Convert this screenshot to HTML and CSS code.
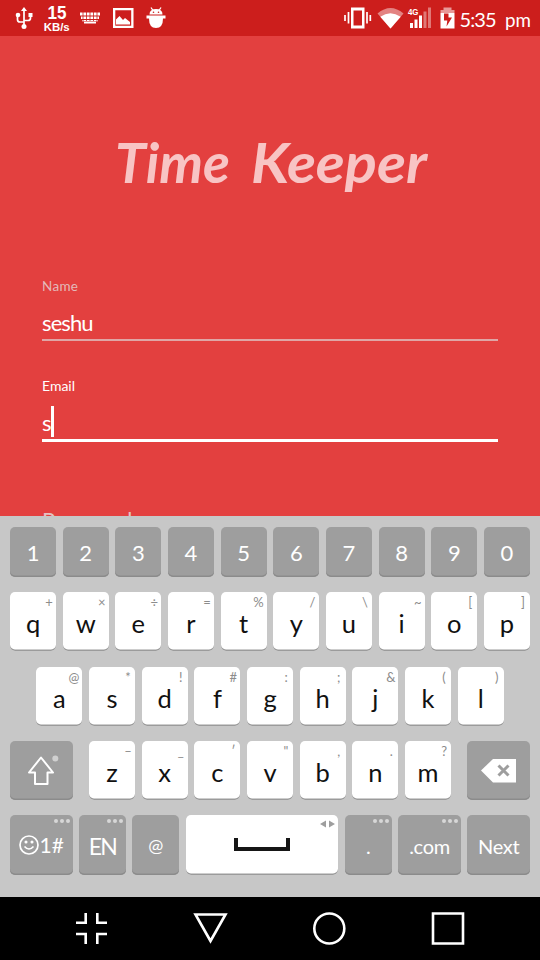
FILE: index.html
```
<!DOCTYPE html>
<html lang="en">
<head>
<meta charset="utf-8">
<title>Time Keeper</title>
<link rel="stylesheet" href="styles.css">
</head>
<body>
<main class="phone">
  <header class="status">
    <svg class="status-left" width="170" height="36" viewBox="0 0 170 36" fill="#fff">
      <g stroke="#fff" stroke-width="1.700" fill="none"><path d="M24 27V10M24 22h-4q-2.500 0-2.500-2.500V16M24 20.500h4q2.500 0 2.500-2.500V16"/></g>
      <path d="M24 7l-3 4h6zM28.500 13h4v4h-4z"/><circle cx="18" cy="15" r="2.300"/><circle cx="24" cy="26.500" r="2.500"/>
      <text class="rate" x="57" y="19" textLength="19" lengthAdjust="spacingAndGlyphs">15</text>
      <text class="unit" x="56.700" y="30.500" textLength="26" lengthAdjust="spacingAndGlyphs">KB/s</text>
      <path d="M80 12.500h20v3h-20zM81 16.500h18v2.500h-18zM82 20h16v1.300h-16zM84 21.700h12v1.800h-12z"/>
      <path d="M83 12v9M86.500 12v9M90 12v9M93.500 12v9M97 12v9" stroke="#cc1e1c" stroke-width=".8"/>
      <path d="M113 8h20.500v20H113zM115.300 10.200v15.600h15.900V10.200z" fill-rule="evenodd"/><path d="M116 24.500v-5l3.500-3.500 3.500 4 2-2 5 4v2.500z"/>
      <path d="M149.500 14.500q0-5.500 6.500-5.500t6.500 5.500zM146.500 15.500h19v3h-2.500q0 9.500-7 9.500t-7-9.500h-2.500z"/><path d="M151 7.500l2 3M161 7.500l-2 3" stroke="#fff" stroke-width="1.300"/><circle cx="153.500" cy="12.300" r=".8" fill="#cc1e1c"/><circle cx="158.500" cy="12.300" r=".8" fill="#cc1e1c"/>
    </svg>
    <svg class="status-right" width="200" height="36" viewBox="340 0 200 36" fill="#fff">
      <path d="M351 7.500h13.500v21H351zM353.500 10.500v15h8.500v-15z" fill-rule="evenodd"/>
      <path d="M345 15v6M348.500 12v11.500M367 12v11.500M370.300 15v6" stroke="#fff" stroke-width="1.700"/>
      <path d="M377.500 13.500q13-11 26 0L390.500 28.500z" opacity=".45"/><path d="M380.300 16.800q10-7 20.400 0L390.500 28.500z"/>
      <text class="net" x="408" y="15" textLength="10.500" lengthAdjust="spacingAndGlyphs">4G</text>
      <path d="M410 23h3v5h-3zM414.500 19.500h3V28h-3zM419 15.500h3V28h-3z"/><path d="M423.500 11.500h3V28h-3zM428 7.500h3V28h-3z" opacity=".4"/>
      <path d="M443.500 7.500h8V10h3v3h-14v-3h3z" opacity=".55"/><path d="M440.500 13h14v15.500h-14z"/><path d="M444 13.500h4.500v4h3.500l-5.500 9 .8-6H444z" fill="#cc1e1c"/>
      <text class="clock" x="459.500" y="26.500" textLength="37">5:35</text><text class="clock" x="505" y="26.500" textLength="26" lengthAdjust="spacingAndGlyphs">pm</text>
    </svg>
  </header>
  <section class="form">
    <h1 class="title"><svg width="320" height="80" viewBox="112 0 320 80"><text x="115" y="53" textLength="115" lengthAdjust="spacingAndGlyphs">Time</text><text x="251" y="53" textLength="176" lengthAdjust="spacingAndGlyphs">Keeper</text></svg></h1>
    <div class="field">
      <div class="label">Name</div>
      <div class="value">seshu</div>
    </div>
    <div class="field active">
      <div class="label">Email</div>
      <div class="value">s<span class="caret"></span></div>
    </div>
    <div class="password">Password</div>
  </section>
  <section class="keyboard">
    <div class="row digits">
      <div class="key dark">1</div><div class="key dark">2</div><div class="key dark">3</div><div class="key dark">4</div><div class="key dark">5</div><div class="key dark">6</div><div class="key dark">7</div><div class="key dark">8</div><div class="key dark">9</div><div class="key dark">0</div>
    </div>
    <div class="row">
      <div class="key">q<i>+</i></div><div class="key">w<i>×</i></div><div class="key">e<i>÷</i></div><div class="key">r<i>=</i></div><div class="key">t<i>%</i></div><div class="key">y<i>/</i></div><div class="key">u<i>\</i></div><div class="key">i<i>~</i></div><div class="key">o<i>[</i></div><div class="key">p<i>]</i></div>
    </div>
    <div class="row home">
      <div class="key">a<i>@</i></div><div class="key">s<i>*</i></div><div class="key">d<i>!</i></div><div class="key">f<i>#</i></div><div class="key">g<i>:</i></div><div class="key">h<i>;</i></div><div class="key">j<i>&amp;</i></div><div class="key">k<i>(</i></div><div class="key">l<i>)</i></div>
    </div>
    <div class="row">
      <div class="key dark wide shift"><svg width="62" height="58" viewBox="0 0 62 58"><path d="M31 16.500L43 31.500H37.500V43H25V31.500H19Z" fill="none" stroke="#fff" stroke-width="2" stroke-linejoin="round"/><circle cx="45.300" cy="17.500" r="3" fill="#d0d0d0"/></svg></div>
      <div class="key">z<i>–</i></div><div class="key">x<i>_</i></div><div class="key">c<i>′</i></div><div class="key">v<i>"</i></div><div class="key">b<i>,</i></div><div class="key">n<i>.</i></div><div class="key">m<i>?</i></div>
      <div class="key dark wide erase"><svg width="62" height="58" viewBox="0 0 62 58"><path d="M13 29.500L25 18H48V41.500H25Z" fill="#fff"/><path d="M30.500 24.500l10 10M40.500 24.500l-10 10" stroke="#9e9e9e" stroke-width="3"/></svg></div>
    </div>
    <div class="row">
      <div class="key dark wide mode"><svg class="smile" width="20" height="20" viewBox="0 0 20 20" fill="none" stroke="#fff" stroke-width="1.700"><circle cx="10" cy="10" r="9"/><path d="M5.500 11.500q4.500 5 9 0"/><circle cx="7" cy="7" r=".7" fill="#fff"/><circle cx="13" cy="7" r=".7" fill="#fff"/></svg>1#<b class="dots"></b></div>
      <div class="key dark lang">EN<b class="dots"></b></div>
      <div class="key dark at">@</div>
      <div class="key space"><svg width="56" height="14" viewBox="0 0 56 14"><path d="M2 0v11h52V0" fill="none" stroke="#161616" stroke-width="4"/></svg><svg class="arrows" width="15" height="8" viewBox="0 0 15 8" fill="#9e9e9e"><path d="M6 .5v7L0 4zM9 .5v7L15 4z"/></svg></div>
      <div class="key dark dot">.<b class="dots"></b></div>
      <div class="key dark wide com">.com<b class="dots"></b></div>
      <div class="key dark wide next">Next</div>
    </div>
  </section>
  <nav class="nav">
    <svg width="540" height="63" viewBox="0 0 540 63" fill="none" stroke="#fff" stroke-width="2.600">
      <path d="M76 25.700h9.700V16M107 25.700h-9.700V16M76 37h9.700v10M107 37h-9.700v10"/>
      <path d="M195.500 17.500h30L210.500 44z"/><circle cx="329.300" cy="31.500" r="15"/><path d="M433 16.500h30v30h-30z"/>
    </svg>
  </nav>
</main>
</body>
</html>
```
FILE: styles.css
```
* { box-sizing: border-box; }
body { margin: 0; font-family: Lato, sans-serif; }
.phone { width: 540px; height: 960px; display: flex; flex-direction: column; overflow: hidden; }
svg { display: block; flex: none; }
.status { height: 36px; background: #cc1e1c; display: flex; justify-content: space-between; }
.rate, .unit { font-family: "Liberation Sans", sans-serif; font-weight: bold; text-anchor: middle; }
.rate { font-size: 18px; }
.unit { font-size: 10.5px; }
.net { font: bold 9px "Liberation Sans", sans-serif; }
.clock { font-size: 20px; font-weight: 400; }

.form { height: 480px; background: #e3403f; overflow: hidden; padding: 94px 42px 0; }
.title { margin: 0 0 0 70px; height: 146px; }
.title text { font-size: 56px; font-style: italic; font-weight: 700; fill: #f8c4c4; }
.title svg { overflow: visible; }
.field { height: 65px; margin-bottom: 35px; border-bottom: 2px solid #dfa6a6; color: #fff; }
.label { font-size: 13.5px; line-height: 20px; color: #e4b9b9; letter-spacing: .3px; }
.value { font-size: 22px; line-height: 28px; margin-top: 13px; display: flex; letter-spacing: -.9px; }
.active { height: 66px; border-bottom: 3px solid #fff; }
.active .label { color: #fff; font-size: 14px; letter-spacing: 0; }
.caret { width: 3px; height: 31px; background: #fff; margin-top: -3px; }
.password { font-size: 22px; line-height: 28px; margin-top: 64px; color: #e4c2c2; letter-spacing: -.3px; }

.keyboard { height: 381px; background: #c7c7c7; padding: 11px 10px 0; display: flex; flex-direction: column; gap: 15.2px; }
.row { display: flex; gap: 6.6px; height: 59.2px; flex: none; }
.digits { height: 50px; }
.home { padding: 0 26.3px; }
.key { position: relative; flex: 1 1 0; display: flex; justify-content: center; background: #fff; border-radius: 5px; box-shadow: inset 0 -1.5px #9b9b9b; color: #111; font-size: 25.5px; font-weight: 400; line-height: 63px; }
.key i { position: absolute; top: 3px; right: 3px; font-size: 13px; line-height: 15px; font-style: normal; color: #8c8c8c; min-width: 8px; text-align: center; }
.dark { background: #9e9e9e; box-shadow: inset 0 -1.5px #8b8b8b; color: #fff; }
.digits .key { font-size: 22px; line-height: 52px; }
.wide { flex: 0 0 62.6px; }
.shift { margin-right: 9.7px; }
.erase { margin-left: 9.7px; }
.mode { font-size: 21px; line-height: 59px; }
.smile { margin-top: 20px; margin-right: 1px; }
.lang { font-size: 23px; line-height: 62px; letter-spacing: -1.6px; }
.at { font-size: 18px; line-height: 60px; }
.space { flex: 0 0 152.8px; align-items: center; }
.arrows { position: absolute; top: 5px; right: 3px; }
.dot, .com, .next { font-size: 20px; line-height: 62px; }
.com, .next { letter-spacing: -.3px; }
.dots { position: absolute; right: 9px; top: 4px; width: 4px; height: 4px; border-radius: 50%; background: #d7d7d7; box-shadow: -6px 0 #d7d7d7, 6px 0 #d7d7d7; }
.nav { height: 63px; background: #000; }
```
